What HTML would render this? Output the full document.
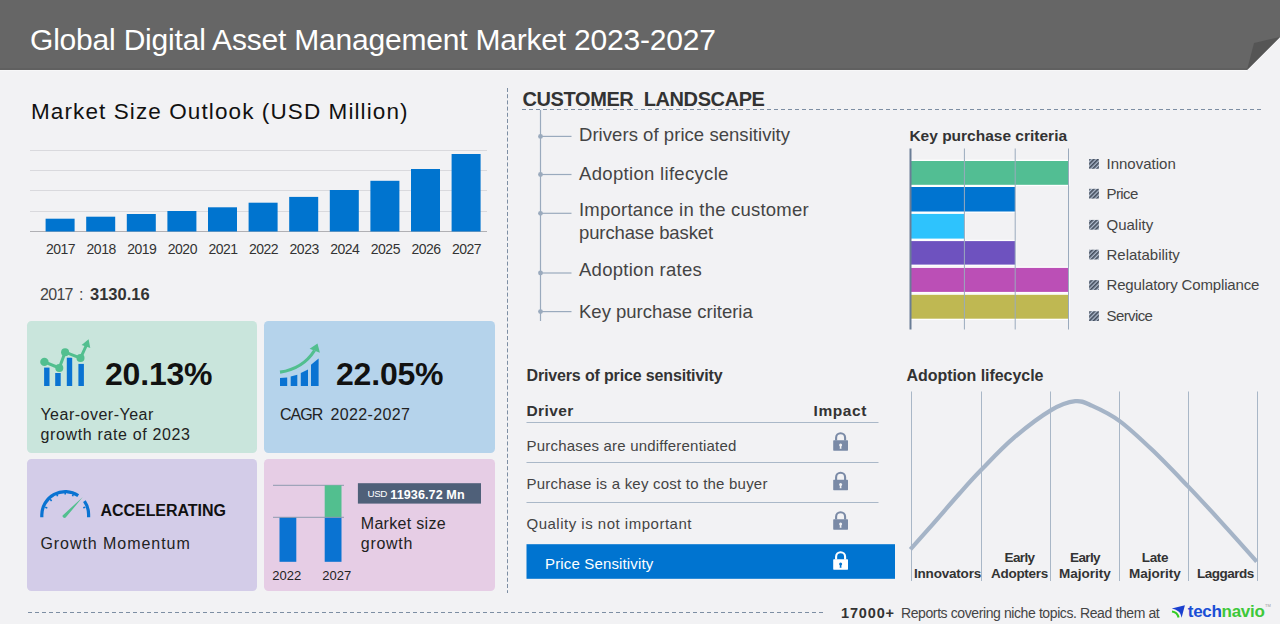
<!DOCTYPE html>
<html><head><meta charset="utf-8">
<style>
*{margin:0;padding:0;box-sizing:border-box}
html,body{width:1280px;height:624px;overflow:hidden;background:#f2f2f4}
body{position:relative;font-family:"Liberation Sans",sans-serif;color:#333}
.a{position:absolute;white-space:nowrap;line-height:1}
.card{position:absolute;border-radius:4.5px}
</style></head><body>
<!-- header -->
<svg class="a" style="left:0;top:0" width="1280" height="72">
  <polygon points="0,0 1280,0 1280,37 1247,70 0,70" fill="#666666"/>
  <polygon points="1254,43 1280,37 1247,70" fill="#555555"/>
  <rect x="0" y="68.3" width="1247" height="1.4" fill="#5e5e5e"/>
  <rect x="0" y="70" width="1247" height="1" fill="#f7f7f8"/>
</svg>
<div class="a" style="left:30px;top:24.6px;font-size:30px;color:#fff;letter-spacing:-0.2px">Global Digital Asset Management Market 2023-2027</div>

<!-- market size outlook -->
<div class="a" style="left:31px;top:100.6px;font-size:22.5px;color:#111;letter-spacing:1.1px">Market Size Outlook (USD Million)</div>
<svg class="a" style="left:0;top:140px" width="500" height="100">
  <g stroke="#d9d9dd" stroke-width="1">
    <line x1="30" y1="10.5" x2="487" y2="10.5"/>
    <line x1="30" y1="30.5" x2="487" y2="30.5"/>
    <line x1="30" y1="50.5" x2="487" y2="50.5"/>
    <line x1="30" y1="71.5" x2="487" y2="71.5"/>
  </g>
  <line x1="30" y1="91.5" x2="487" y2="91.5" stroke="#b0b0b4" stroke-width="1"/>
  <g fill="#0074cf">
    <rect x="45.6" y="78.7" width="29" height="12.8"/>
    <rect x="86.2" y="76.7" width="29" height="14.8"/>
    <rect x="126.8" y="74" width="29" height="17.5"/>
    <rect x="167.4" y="71" width="29" height="20.5"/>
    <rect x="208" y="67.3" width="29" height="24.2"/>
    <rect x="248.6" y="62.7" width="29" height="28.8"/>
    <rect x="289.2" y="56.9" width="29" height="34.6"/>
    <rect x="329.8" y="50" width="29" height="41.5"/>
    <rect x="370.4" y="40.8" width="29" height="50.7"/>
    <rect x="411" y="29" width="29" height="62.5"/>
    <rect x="451.6" y="14" width="29" height="77.5"/>
  </g>
</svg>
<div class="a" style="left:0.4px;top:241.6px;font-size:14px;color:#333;width:500px;height:16px;letter-spacing:-0.5px">
  <span class="a" style="left:45.6px;width:29px;text-align:center">2017</span>
  <span class="a" style="left:86.2px;width:29px;text-align:center">2018</span>
  <span class="a" style="left:126.8px;width:29px;text-align:center">2019</span>
  <span class="a" style="left:167.4px;width:29px;text-align:center">2020</span>
  <span class="a" style="left:208px;width:29px;text-align:center">2021</span>
  <span class="a" style="left:248.6px;width:29px;text-align:center">2022</span>
  <span class="a" style="left:289.2px;width:29px;text-align:center">2023</span>
  <span class="a" style="left:329.8px;width:29px;text-align:center">2024</span>
  <span class="a" style="left:370.4px;width:29px;text-align:center">2025</span>
  <span class="a" style="left:411px;width:29px;text-align:center">2026</span>
  <span class="a" style="left:451.6px;width:29px;text-align:center">2027</span>
</div>
<div class="a" style="left:40px;top:286.5px;font-size:16px;color:#444;letter-spacing:-0.7px">2017</div><div class="a" style="left:79px;top:286.5px;font-size:16px;color:#444">:</div>
<div class="a" style="left:90px;top:285.5px;font-size:16.5px;font-weight:bold;color:#333">3130.16</div>

<!-- cards -->
<div class="card" style="left:27px;top:321px;width:230px;height:132px;background:#c9e5dc"></div>
<div class="card" style="left:264px;top:321px;width:231px;height:132px;background:#b5d3eb"></div>
<div class="card" style="left:27px;top:459px;width:230px;height:132px;background:#d3cce8"></div>
<div class="card" style="left:264px;top:459px;width:231px;height:132px;background:#e6cde5"></div>


<!-- card 1 content -->
<svg class="a" style="left:36px;top:335px" width="60" height="55">
  <g fill="#0a73d2">
    <rect x="8.1" y="32.6" width="5.4" height="18.4"/>
    <rect x="19.2" y="38" width="5.5" height="13"/>
    <rect x="30.8" y="22.7" width="5.4" height="28.3"/>
    <rect x="42.4" y="28.9" width="5.5" height="22.1"/>
  </g>
  <g stroke="#c9e5dc" stroke-width="5" fill="none" stroke-linejoin="round"><polyline points="8.4,26.9 23.3,33 29.1,17.2 44.5,23.1 51,9.5"/></g>
  <g stroke="#52bf8f" stroke-width="3" fill="none" stroke-linejoin="round"><polyline points="8.4,26.9 23.3,33 29.1,17.2 44.5,23.1 50.5,10"/></g>
  <g fill="#52bf8f">
    <circle cx="8.4" cy="26.9" r="4.2"/><circle cx="23.3" cy="33" r="4"/><circle cx="29.1" cy="17.2" r="4"/><circle cx="44.5" cy="23.1" r="4"/>
    <polygon points="52.6,4.2 45.6,9.9 54.3,12.9"/>
  </g>
</svg>
<div class="a" style="left:105px;top:358.1px;font-size:32px;font-weight:bold;color:#111;letter-spacing:-0.2px">20.13%</div>
<div class="a" style="left:40.4px;top:406.5px;font-size:16px;color:#222;letter-spacing:0.5px">Year-over-Year</div>
<div class="a" style="left:40.4px;top:426.6px;font-size:16px;color:#222;letter-spacing:0.65px">growth rate of 2023</div>

<!-- card 2 content -->
<svg class="a" style="left:274px;top:338px" width="52" height="52">
  <g fill="#0a73d2">
    <polygon points="6,40 13.2,39.4 13.2,47.9 6,47.9"/>
    <polygon points="16.7,38.5 23.3,36.8 23.3,47.9 16.7,47.9"/>
    <polygon points="26.8,35 34,31.5 34,47.9 26.8,47.9"/>
    <polygon points="37,26.7 44.6,20.4 44.6,47.9 37,47.9"/>
  </g>
  <path d="M6,34.2 C20,32 32,26 40.5,12.5" stroke="#b5d3eb" stroke-width="6" fill="none"/>
  <path d="M6,34.2 C20,32 32,26 40.5,12.5" stroke="#52bf8f" stroke-width="3.2" fill="none"/>
  <polygon points="43.5,5.6 35.6,10.8 45.9,14.8" fill="#52bf8f"/>
</svg>
<div class="a" style="left:336px;top:358.1px;font-size:32px;font-weight:bold;color:#111;letter-spacing:-0.2px">22.05%</div>
<div class="a" style="left:280px;top:406.5px;font-size:16px;color:#222;letter-spacing:-1px">CAGR</div><div class="a" style="left:330.6px;top:406.5px;font-size:16px;color:#222;letter-spacing:0.35px">2022-2027</div>

<!-- card 3 content -->
<svg class="a" style="left:36px;top:484px" width="60" height="40">
  <path d="M5.8,33.3 L5.8,31.1 A23.4,23.4 0 0 1 42.2,11.6" stroke="#0a73d2" stroke-width="3.2" fill="none"/>
  <path d="M48.4,17.2 A23.4,23.4 0 0 1 52.6,31.1 L52.6,33.3" stroke="#0a73d2" stroke-width="3.2" fill="none"/>
  <g stroke="#0a73d2" stroke-width="1.6">
    <line x1="9.2" y1="23.3" x2="11.3" y2="24"/>
    <line x1="14.2" y1="15.3" x2="15.6" y2="17"/>
    <line x1="20.8" y1="10.3" x2="21.6" y2="12.3"/>
    <line x1="29.2" y1="8.5" x2="29.2" y2="10.6"/>
    <line x1="37.3" y1="10.2" x2="36.5" y2="12.3"/>
    <line x1="49.3" y1="23.2" x2="47.2" y2="23.8"/>
  </g>
  <path d="M26.6,31.4 L46.8,13.1 L29.7,33.6 A2,2 0 0 1 26.6,31.4 Z" fill="#52bf8f"/>
</svg>
<div class="a" style="left:100.5px;top:503.4px;font-size:16px;font-weight:bold;color:#111;letter-spacing:-0.05px">ACCELERATING</div>
<div class="a" style="left:40.4px;top:536.3px;font-size:16px;color:#222;letter-spacing:0.95px">Growth Momentum</div>

<!-- card 4 content -->
<svg class="a" style="left:264px;top:459px" width="231" height="132">
  <line x1="9" y1="26.3" x2="80" y2="26.3" stroke="#8e9aae" stroke-width="1"/>
  <rect x="15.5" y="58.3" width="16.8" height="44.5" fill="#0a73d2"/>
  <rect x="60.7" y="26.3" width="16.8" height="32" fill="#52bf8f"/>
  <rect x="60.7" y="58.3" width="16.8" height="44.5" fill="#0a73d2"/>
  <line x1="9" y1="58.3" x2="80" y2="58.3" stroke="#8e9aae" stroke-width="1"/>
  <rect x="93.9" y="24.2" width="123.1" height="20.4" fill="#4f6079"/>
</svg>
<div class="a" style="left:272.3px;top:568.8px;font-size:13px;color:#222">2022</div>
<div class="a" style="left:322.3px;top:568.8px;font-size:13px;color:#222">2027</div>
<div class="a" style="left:367.5px;top:488.9px;font-size:9.8px;color:#fff;letter-spacing:-0.4px">USD</div>
<div class="a" style="left:390.3px;top:488.7px;font-size:12.6px;font-weight:bold;color:#fff;letter-spacing:0.08px">11936.72 Mn</div>
<div class="a" style="left:360.8px;top:516.3px;font-size:16px;color:#222;letter-spacing:0.3px">Market size</div>
<div class="a" style="left:360.8px;top:535.5px;font-size:16px;color:#222;letter-spacing:0.7px">growth</div>


<!-- divider -->
<svg class="a" style="left:0;top:0" width="1280" height="624">
  <line x1="507.5" y1="88" x2="507.5" y2="593" stroke="#7d8ea3" stroke-width="1" stroke-dasharray="4,2.2"/>
  <line x1="522" y1="109.5" x2="1262" y2="109.5" stroke="#7d8ea3" stroke-width="1" stroke-dasharray="4,3"/>
  <line x1="28" y1="612.5" x2="823" y2="612.5" stroke="#7d8ea3" stroke-width="1" stroke-dasharray="4,3"/>
  <!-- tree -->
  <line x1="540.5" y1="110" x2="540.5" y2="321" stroke="#9aaabd" stroke-width="1.2"/>
  <g stroke="#9aaabd" stroke-width="1.2">
    <line x1="540" y1="136.4" x2="571.5" y2="136.4"/>
    <line x1="540" y1="174.5" x2="571.5" y2="174.5"/>
    <line x1="540" y1="213.3" x2="571.5" y2="213.3"/>
    <line x1="540" y1="273" x2="571.5" y2="273"/>
    <line x1="540" y1="311.6" x2="571.5" y2="311.6"/>
  </g>
  <g fill="#9aaabd">
    <circle cx="540.5" cy="136.4" r="2.4"/><circle cx="540.5" cy="174.5" r="2.4"/><circle cx="540.5" cy="213.3" r="2.4"/>
    <circle cx="540.5" cy="273" r="2.4"/><circle cx="540.5" cy="311.6" r="2.4"/>
  </g>
</svg>
<div class="a" style="left:522.5px;top:88.7px;font-size:20px;font-weight:bold;color:#333;letter-spacing:-0.4px">CUSTOMER&nbsp; LANDSCAPE</div>
<div class="a" style="left:579px;font-size:18.5px;color:#444">
  <div class="a" style="left:0;top:126.3px;letter-spacing:0.05px">Drivers of price sensitivity</div>
  <div class="a" style="left:0;top:164.7px;letter-spacing:0.32px">Adoption lifecycle</div>
  <div class="a" style="left:0;top:201px;letter-spacing:0.22px">Importance in the customer</div>
  <div class="a" style="left:0;top:223.9px;letter-spacing:-0.12px">purchase basket</div>
  <div class="a" style="left:0;top:260.9px;letter-spacing:0.27px">Adoption rates</div>
  <div class="a" style="left:0;top:302.8px;letter-spacing:0px">Key purchase criteria</div>
</div>

<!-- key purchase criteria -->
<div class="a" style="left:909.4px;top:128.4px;font-size:15.5px;font-weight:bold;color:#333;letter-spacing:0px">Key purchase criteria</div>
<svg class="a" style="left:900px;top:140px" width="180" height="200">
  <g fill="#ffffff"><rect x="10" y="19.7" width="159.5" height="26.4"/><rect x="10" y="45.7" width="106.2" height="27.1"/><rect x="10" y="72.6" width="55.4" height="27.3"/><rect x="10" y="99.8" width="106.2" height="26.1"/><rect x="10" y="126.6" width="159.5" height="26.6"/><rect x="10" y="153.5" width="159.5" height="26.5"/></g>
  <rect x="10" y="21.0" width="158.5" height="23.8" fill="#52be93"/>
  <rect x="10" y="47.0" width="105.2" height="24.5" fill="#0074d0"/>
  <rect x="10" y="73.9" width="54.4" height="24.7" fill="#2ec3fd"/>
  <rect x="10" y="101.1" width="105.2" height="23.5" fill="#6e52bf"/>
  <rect x="10" y="127.9" width="158.5" height="24.0" fill="#bb4fb6"/>
  <rect x="10" y="154.8" width="158.5" height="23.9" fill="#bfb852"/>
  <g stroke="#9aaabd" stroke-width="1">
    <line x1="64.4" y1="8.5" x2="64.4" y2="189.5"/>
    <line x1="115.2" y1="8.5" x2="115.2" y2="189.5"/>
    <line x1="168.5" y1="8.5" x2="168.5" y2="189.5"/>
  </g>
  <line x1="10.5" y1="8.5" x2="10.5" y2="189.5" stroke="#6a7d96" stroke-width="2"/>
</svg>
<svg class="a" style="left:1085px;top:150px" width="20" height="180">
  <defs>
    <pattern id="hatch" width="3" height="3" patternUnits="userSpaceOnUse" patternTransform="rotate(45)">
      <rect width="3" height="3" fill="#b4c0d2"/><rect width="1.7" height="3" fill="#444e5d"/>
    </pattern>
  </defs>
  <g fill="url(#hatch)">
    <rect x="4.1" y="9" width="9.8" height="9.8"/>
    <rect x="4.1" y="38.8" width="9.8" height="9.8"/>
    <rect x="4.1" y="69.9" width="9.8" height="9.8"/>
    <rect x="4.1" y="99.7" width="9.8" height="9.8"/>
    <rect x="4.1" y="130.1" width="9.8" height="9.8"/>
    <rect x="4.1" y="161.2" width="9.8" height="9.8"/>
  </g>
</svg>
<div class="a" style="left:1106.5px;top:-0.7px;font-size:15px;color:#444">
  <div class="a" style="left:0;top:156.7px">Innovation</div>
  <div class="a" style="left:0;top:186.5px;letter-spacing:-0.6px">Price</div>
  <div class="a" style="left:0;top:217.6px">Quality</div>
  <div class="a" style="left:0;top:247.4px">Relatability</div>
  <div class="a" style="left:0;top:277.8px;letter-spacing:-0.15px">Regulatory Compliance</div>
  <div class="a" style="left:0;top:308.9px;letter-spacing:-0.6px">Service</div>
</div>

<!-- drivers table -->
<div class="a" style="left:526.5px;top:367.7px;font-size:16px;font-weight:bold;color:#333;letter-spacing:-0.15px">Drivers of price sensitivity</div>
<div class="a" style="left:526.5px;top:403.4px;font-size:15.5px;font-weight:bold;color:#333;letter-spacing:0.4px">Driver</div>
<div class="a" style="left:813.5px;top:403.4px;font-size:15.5px;font-weight:bold;color:#333;letter-spacing:0.6px">Impact</div>
<svg class="a" style="left:0;top:0" width="1280" height="624">
  <g stroke="#aab8c8" stroke-width="1">
    <line x1="526.5" y1="422.5" x2="878.5" y2="422.5"/>
    <line x1="526.5" y1="462.5" x2="878.5" y2="462.5"/>
    <line x1="526.5" y1="502.5" x2="878.5" y2="502.5"/>
  </g>
  <rect x="526.5" y="544.2" width="368.5" height="34.6" fill="#0074d0"/>
</svg>
<div class="a" style="left:526.5px;font-size:15px;color:#444">
  <div class="a" style="left:0;top:437.7px;letter-spacing:0.2px">Purchases are undifferentiated</div>
  <div class="a" style="left:0;top:476.1px;letter-spacing:0.22px">Purchase is a key cost to the buyer</div>
  <div class="a" style="left:0;top:516.1px;letter-spacing:0.5px">Quality is not important</div>
  <div class="a" style="left:18.5px;top:555.8px;letter-spacing:0.15px;color:#fff">Price Sensitivity</div>
</div>


<!-- locks -->
<svg class="a" style="left:0;top:0" width="1280" height="624">
<g transform="translate(828,428)"><path d="M8.1,12.5 V9.7 A4.5,4.5 0 0 1 17.1,9.7 V12.5" stroke="#7a8aa6" stroke-width="2.1" fill="none"/><rect x="5.2" y="12.3" width="14.8" height="10.4" rx="0.6" fill="#7a8aa6"/><circle cx="12.6" cy="17.1" r="1.5" fill="#f2f2f4"/><path d="M12,17.5 h1.2 l0.3,3.3 h-1.8 z" fill="#f2f2f4"/></g>
<g transform="translate(828,467.5)"><path d="M8.1,12.5 V9.7 A4.5,4.5 0 0 1 17.1,9.7 V12.5" stroke="#7a8aa6" stroke-width="2.1" fill="none"/><rect x="5.2" y="12.3" width="14.8" height="10.4" rx="0.6" fill="#7a8aa6"/><circle cx="12.6" cy="17.1" r="1.5" fill="#f2f2f4"/><path d="M12,17.5 h1.2 l0.3,3.3 h-1.8 z" fill="#f2f2f4"/></g>
<g transform="translate(828,507)"><path d="M8.1,12.5 V9.7 A4.5,4.5 0 0 1 17.1,9.7 V12.5" stroke="#7a8aa6" stroke-width="2.1" fill="none"/><rect x="5.2" y="12.3" width="14.8" height="10.4" rx="0.6" fill="#7a8aa6"/><circle cx="12.6" cy="17.1" r="1.5" fill="#f2f2f4"/><path d="M12,17.5 h1.2 l0.3,3.3 h-1.8 z" fill="#f2f2f4"/></g>
<g transform="translate(828,547)"><path d="M8.1,12.5 V9.7 A4.5,4.5 0 0 1 17.1,9.7 V12.5" stroke="#ffffff" stroke-width="2.1" fill="none"/><rect x="5.2" y="12.3" width="14.8" height="10.4" rx="0.6" fill="#ffffff"/><circle cx="12.6" cy="17.1" r="1.5" fill="#0074d0"/><path d="M12,17.5 h1.2 l0.3,3.3 h-1.8 z" fill="#0074d0"/></g>
</svg>

<!-- adoption lifecycle -->
<div class="a" style="left:906.5px;top:367.5px;font-size:16px;font-weight:bold;color:#333;letter-spacing:-0.05px">Adoption lifecycle</div>
<svg class="a" style="left:0;top:0" width="1280" height="624">
  <g stroke="#a9b7c7" stroke-width="1">
    <line x1="911.5" y1="391.5" x2="911.5" y2="581"/>
    <line x1="981.5" y1="391.5" x2="981.5" y2="581"/>
    <line x1="1050.5" y1="391.5" x2="1050.5" y2="581"/>
    <line x1="1119.5" y1="391.5" x2="1119.5" y2="581"/>
    <line x1="1188.5" y1="391.5" x2="1188.5" y2="581"/>
    <line x1="1257.5" y1="391.5" x2="1257.5" y2="581"/>
  </g>
  <path d="M910.4,549.3 C914.0,545.2 924.0,534.1 932.2,524.8 C940.4,515.5 951.3,502.7 959.5,493.5 C967.7,484.3 972.2,479.1 981.3,469.8 C990.4,460.5 1002.4,447.6 1014,437.7 C1025.6,427.8 1040.5,416.5 1050.7,410.4 C1060.9,404.3 1068.3,401.9 1075.2,401.2 C1082.1,400.4 1084.9,402.6 1092.3,405.9 C1099.7,409.2 1109.6,413.7 1119.7,421.1 C1129.8,428.6 1141.5,439.7 1152.9,450.6 C1164.3,461.5 1177.2,475.1 1188.3,486.6 C1199.3,498.1 1207.8,507.3 1219.2,519.8 C1230.6,532.3 1250.5,554.6 1256.7,561.6" stroke="#a5b4c7" stroke-width="4.2" fill="none" stroke-linecap="butt"/>
</svg>
<div class="a" style="left:0;top:0;font-size:13.5px;font-weight:bold;color:#333">
  <div class="a" style="left:914px;top:566.6px;letter-spacing:-0.2px">Innovators</div>
  <div class="a" style="left:985px;top:550.6px;width:69px;text-align:center;letter-spacing:-0.6px">Early</div>
  <div class="a" style="left:985px;top:566.6px;width:69px;text-align:center;letter-spacing:-0.3px">Adopters</div>
  <div class="a" style="left:1050.5px;top:550.6px;width:69px;text-align:center;letter-spacing:-0.6px">Early</div>
  <div class="a" style="left:1050.5px;top:566.6px;width:69px;text-align:center;letter-spacing:0px">Majority</div>
  <div class="a" style="left:1120.5px;top:550.6px;width:69px;text-align:center;letter-spacing:-0.3px">Late</div>
  <div class="a" style="left:1120.5px;top:566.6px;width:69px;text-align:center;letter-spacing:0px">Majority</div>
  <div class="a" style="left:1190px;top:566.6px;width:71px;text-align:center;letter-spacing:-0.5px">Laggards</div>
</div>

<!-- footer -->
<div class="a" style="left:841px;top:605.5px;font-size:14.5px;font-weight:bold;color:#333;letter-spacing:0.85px">17000+</div>
<div class="a" style="left:901px;top:606.1px;font-size:14px;color:#444;letter-spacing:-0.4px">Reports covering niche topics. Read them at</div>
<svg class="a" style="left:1166px;top:600px" width="30" height="22">
  <path d="M5.8,8.5 L18.9,5.2 L15.6,17.8 Q14.8,13 12.2,11.2 Q9.5,9.4 5.8,8.5 Z" fill="#1a3fcf"/>
  <path d="M6,11.6 Q11.3,12.3 12.6,17.6" stroke="#33cc22" stroke-width="2" fill="none"/>
</svg>
<div class="a" style="left:1187.8px;top:602.6px;font-size:17px;font-weight:bold;letter-spacing:-0.3px"><span style="color:#1a4fd6">tech</span><span style="color:#3ec83a">navio</span></div>

<div class="a" style="left:1265px;top:603.5px;font-size:4px;color:#999">TM</div>
</body></html>
